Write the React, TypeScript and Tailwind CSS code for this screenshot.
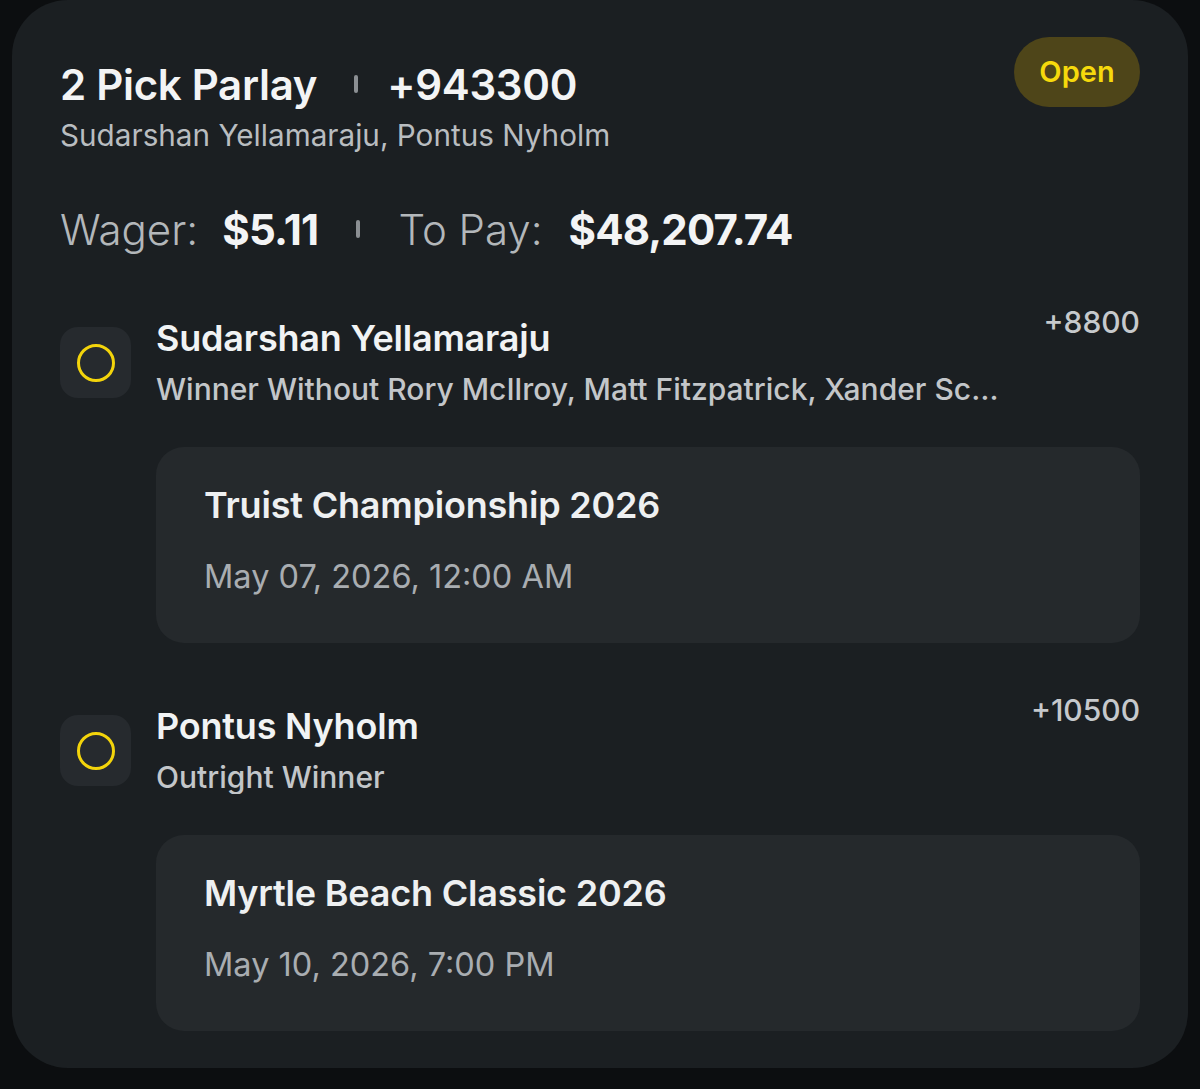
import React from "react";

function Sep({ className = "" }: { className?: string }) {
  return <span className={"inline-block w-[4px] h-[18px] rounded-full bg-[#8b8f93] " + className} />;
}

function Leg({
  name,
  desc,
  odds,
  event,
  date,
}: {
  name: string;
  desc: string;
  odds: string;
  event: string;
  date: string;
}) {
  return (
    <div className="flex flex-col">
      <div className="flex items-start">
        <div className="mt-[20px] w-[71px] h-[71px] rounded-[18px] bg-[#262a2e] flex items-center justify-center shrink-0">
          <svg width="40" height="40" viewBox="0 0 40 40">
            <circle cx="20" cy="20" r="17.5" fill="none" stroke="#f3d40b" strokeWidth="3" />
          </svg>
        </div>
        <div className="ml-[25px] pt-[11px] w-[846px] min-w-0">
          <div className="text-[36px] leading-[40px] font-semibold text-[#f1f3f4] tracking-[-0.2px] whitespace-nowrap">{name}</div>
          <div className="mt-[14px] text-[30px] leading-[34px] font-medium text-[#c3c6c9] truncate">{desc}</div>
        </div>
        <div className="ml-auto text-[30px] leading-[30px] font-medium text-[#c6c9cc] whitespace-nowrap">{odds}</div>
      </div>
      <div className="mt-[41px] ml-[96px] h-[196px] rounded-[28px] bg-[#25292c] px-[48px] pt-[38px]">
        <div className="text-[36px] leading-[40px] font-semibold text-[#eef0f1] tracking-[-0.2px]">{event}</div>
        <div className="mt-[35px] text-[32.5px] leading-[34px] font-normal text-[#a9adb1]">{date}</div>
      </div>
    </div>
  );
}

export default function App() {
  return (
    <div
      className="w-[1200px] h-[1089px] bg-[#0c0e10] overflow-hidden"
      style={{ fontFamily: "Inter, 'Noto Sans', sans-serif" }}
    >
      <div className="mx-[12px] h-[1068px] rounded-b-[56px] rounded-t-[56px] bg-[#1b1f22] px-[48px] pt-[37px] pb-[37px] flex flex-col">
        <div className="flex items-start justify-between">
          <div className="pt-[25px]">
            <div className="flex items-center h-[44px] text-[42px] font-semibold text-[#f3f4f5] tracking-[-0.3px]">
              <span>2 Pick Parlay</span>
              <Sep className="ml-[37px] mr-[29px]" />
              <span>+943300</span>
            </div>
            <div className="mt-[12px] text-[29.7px] leading-[34px] text-[#b9bdc0]">
              Sudarshan Yellamaraju, Pontus Nyholm
            </div>
          </div>
          <div className="h-[70px] w-[126px] rounded-full bg-[#4e4519] flex items-center justify-center text-[29px] font-semibold text-[#f6d90c]">
            Open
          </div>
        </div>

        <div className="mt-[53px] flex items-center h-[48px] text-[42px]">
          <span className="font-light text-[#b3b7ba]">Wager:</span>
          <span className="ml-[24px] font-bold text-[#f3f4f5] tracking-[-0.7px]">$5.11</span>
          <Sep className="mx-[38px]" />
          <span className="font-light text-[#b3b7ba]">To Pay:</span>
          <span className="ml-[26px] font-bold text-[#f3f4f5] tracking-[-0.9px]">$48,207.74</span>
        </div>

        <div className="mt-[54px]">
          <Leg
            name="Sudarshan Yellamaraju"
            desc="Winner Without Rory McIlroy, Matt Fitzpatrick, Xander Schauffele, Scottie Scheffler"
            odds="+8800"
            event="Truist Championship 2026"
            date="May 07, 2026, 12:00 AM"
          />
        </div>
        <div className="mt-[52px]">
          <Leg
            name="Pontus Nyholm"
            desc="Outright Winner"
            odds="+10500"
            event="Myrtle Beach Classic 2026"
            date="May 10, 2026, 7:00 PM"
          />
        </div>
      </div>
    </div>
  );
}
